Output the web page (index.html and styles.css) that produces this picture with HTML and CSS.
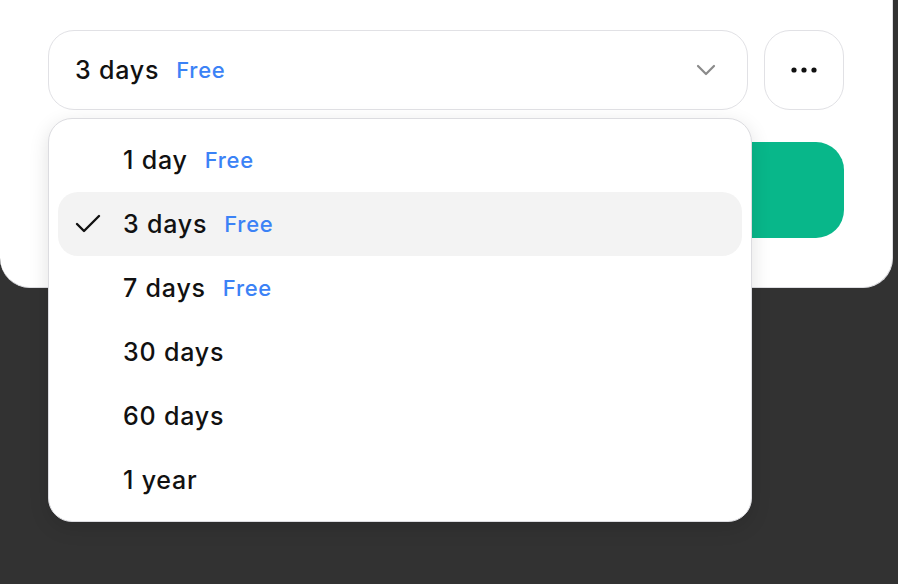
FILE: index.html
```html
<!DOCTYPE html>
<html lang="en">
<head>
<meta charset="utf-8">
<title>Duration picker</title>
<link rel="stylesheet" href="styles.css">
</head>
<body>
<div class="card">
  <div class="row">
    <div class="select">
      <span class="label">3 days</span><span class="free">Free</span>
      <svg class="chev" width="20" height="12" viewBox="0 0 20 12"><path d="M2 2 L10 10 L18 2" fill="none" stroke="#8a8a8a" stroke-width="2.2" stroke-linecap="round" stroke-linejoin="round"/></svg>
    </div>
    <div class="more">
      <svg width="26" height="6" viewBox="0 0 26 6"><circle cx="3" cy="3" r="2.6" fill="#111"/><circle cx="13" cy="3" r="2.6" fill="#111"/><circle cx="23" cy="3" r="2.6" fill="#111"/></svg>
    </div>
  </div>
  <div class="go"></div>
</div>
<div class="menu">
  <div class="item"><span class="check"></span><span class="label">1 day</span><span class="free">Free</span></div>
  <div class="item active"><span class="check"><svg width="26" height="20" viewBox="0 0 26 20"><path d="M2 10 L9 17 L24 2" fill="none" stroke="#111" stroke-width="2.4" stroke-linecap="round" stroke-linejoin="round"/></svg></span><span class="label">3 days</span><span class="free">Free</span></div>
  <div class="item"><span class="check"></span><span class="label">7 days</span><span class="free">Free</span></div>
  <div class="item"><span class="check"></span><span class="label">30 days</span></div>
  <div class="item"><span class="check"></span><span class="label">60 days</span></div>
  <div class="item"><span class="check"></span><span class="label">1 year</span></div>
</div>
</body>
</html>
```
FILE: styles.css
```css
html, body {
  margin: 0;
  padding: 0;
}
body {
  background: #323232;
  font-family: Inter, "Noto Sans", sans-serif;
  color: #111;
  width: 898px;
  height: 584px;
  overflow: hidden;
  position: relative;
}
.card {
  box-sizing: border-box;
  width: 893px;
  height: 288px;
  background: #fff;
  border-radius: 0 0 30px 30px;
  border-right: 1px solid #dedee2;
  border-bottom: 1px solid #dedee2;
  padding: 30px 48px 0 48px;
}
.row {
  display: flex;
  gap: 16px;
}
.select {
  box-sizing: border-box;
  width: 700px;
  height: 80px;
  border: 1.5px solid #e1e1e5;
  border-radius: 26px;
  display: flex;
  align-items: center;
  padding: 0 31px 0 26px;
}
.label {
  font-size: 25px;
  font-weight: 450;
  letter-spacing: 0.8px;
}
.free {
  font-size: 22px;
  font-weight: 450;
  letter-spacing: 0.7px;
  color: #3b82f6;
  margin-left: 17px;
}
.chev {
  margin-left: auto;
}
.more {
  box-sizing: border-box;
  width: 80px;
  height: 80px;
  border: 1.5px solid #e1e1e5;
  border-radius: 26px;
  display: flex;
  align-items: center;
  justify-content: center;
}
.go {
  margin-top: 32px;
  height: 96px;
  width: 796px;
  background: #08b78a;
  border-radius: 28px;
}
.menu {
  position: absolute;
  left: 48px;
  top: 118px;
  box-sizing: border-box;
  width: 704px;
  padding: 9px 9px;
  background: #fff;
  border: 1.5px solid #dcdce0;
  border-radius: 24px;
  box-shadow: 0 6px 20px rgba(0, 0, 0, 0.12);
}
.item {
  height: 64px;
  border-radius: 20px;
  display: flex;
  align-items: center;
  padding-left: 17px;
}
.item.active {
  background: #f3f3f3;
}
.check {
  width: 48px;
  display: flex;
  align-items: center;
}
```
